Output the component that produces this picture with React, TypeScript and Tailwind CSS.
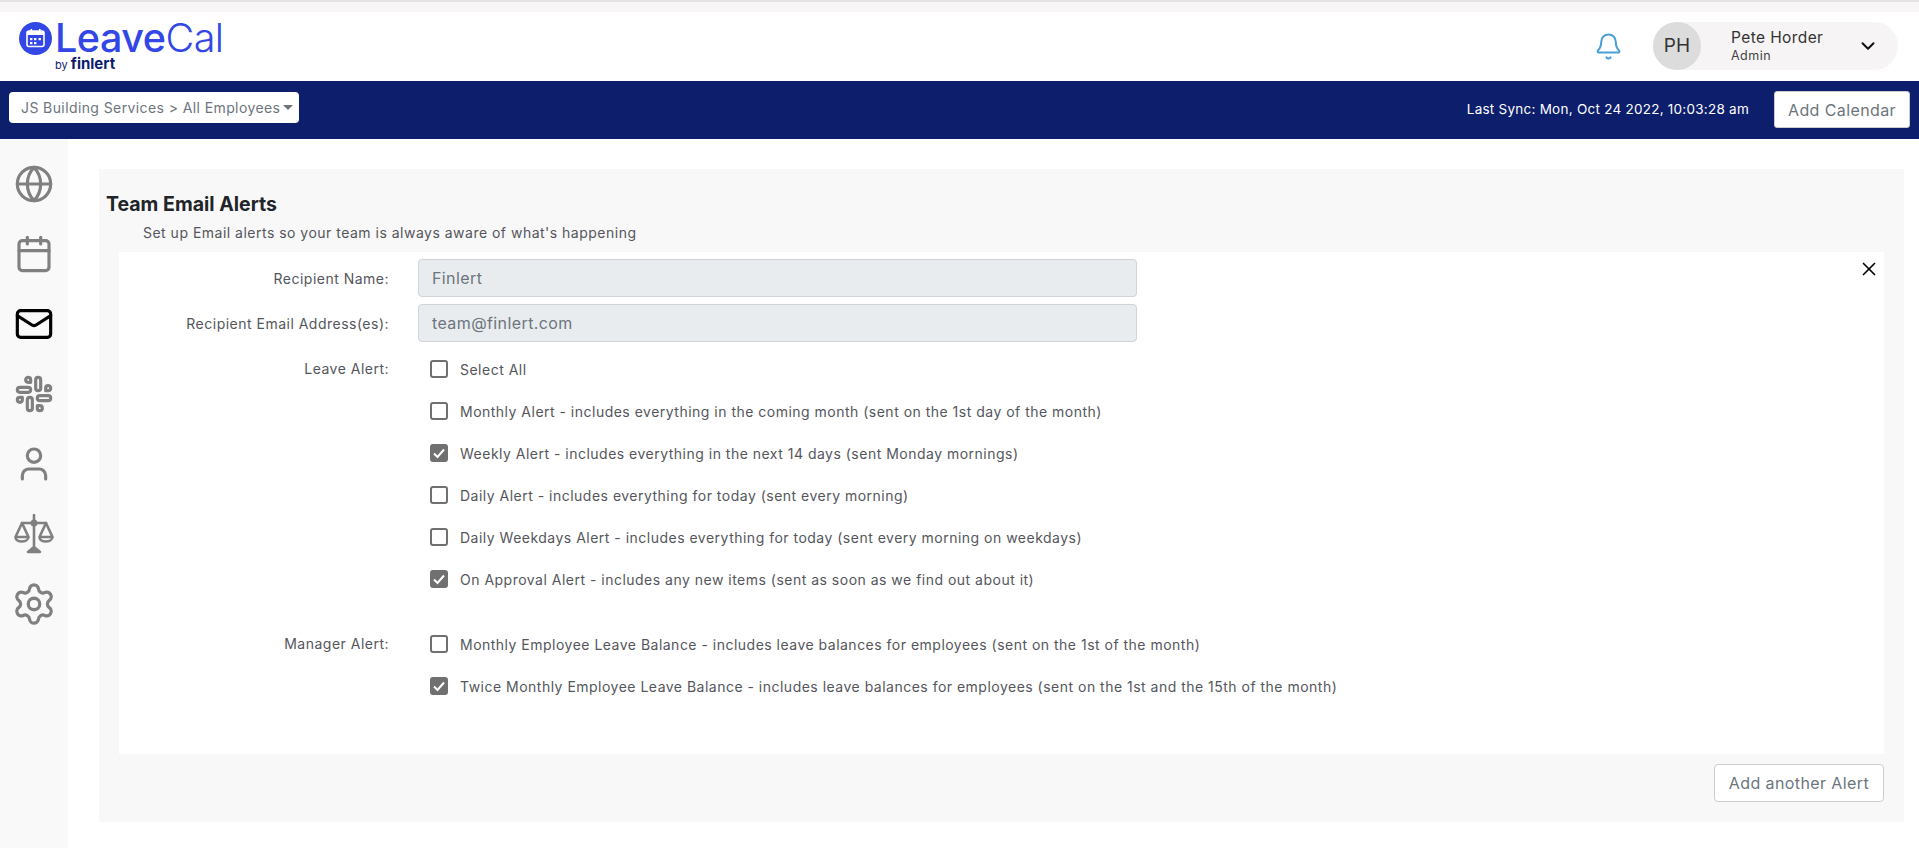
import { Bell, Calendar, ChevronDown, Globe, Mail, Settings, Slack, User, X } from 'lucide-react';

const font = { fontFamily: 'Inter, "Open Sans", sans-serif' };

type AlertOption = {
  label: string;
  checked?: boolean;
};

const leaveAlerts: AlertOption[] = [
  { label: 'Select All' },
  { label: 'Monthly Alert - includes everything in the coming month (sent on the 1st day of the month)' },
  { label: 'Weekly Alert - includes everything in the next 14 days (sent Monday mornings)', checked: true },
  { label: 'Daily Alert - includes everything for today (sent every morning)' },
  { label: 'Daily Weekdays Alert - includes everything for today (sent every morning on weekdays)' },
  { label: 'On Approval Alert - includes any new items (sent as soon as we find out about it)', checked: true },
];

const managerAlerts: AlertOption[] = [
  { label: 'Monthly Employee Leave Balance - includes leave balances for employees (sent on the 1st of the month)' },
  {
    label:
      'Twice Monthly Employee Leave Balance - includes leave balances for employees (sent on the 1st and the 15th of the month)',
    checked: true,
  },
];

const LogoIcon = () => (
  <svg width="33" height="33" viewBox="0 0 33 33">
    <circle cx="16.5" cy="16.5" r="16.5" fill="#3247e6" />
    <rect x="8" y="9" width="17" height="15.5" rx="2" fill="none" stroke="#fff" strokeWidth="1.6" />
    <rect x="8" y="9" width="17" height="4" fill="#fff" />
    <rect x="11.5" y="7" width="1.6" height="4" fill="#fff" />
    <rect x="20" y="7" width="1.6" height="4" fill="#fff" />
    <rect x="11" y="16" width="2.4" height="2.2" fill="#fff" />
    <rect x="15" y="16" width="2.4" height="2.2" fill="#fff" />
    <rect x="19.5" y="16" width="2.4" height="2.2" fill="#fff" />
    <rect x="11" y="20" width="2.4" height="2.2" fill="#fff" />
    <rect x="15" y="20" width="2.4" height="2.2" fill="#fff" />
  </svg>
);

const ScaleIcon = () => (
  <svg width="40" height="40" viewBox="0 0 40 40" fill="none" stroke="#808080" strokeWidth="2.6" strokeLinejoin="round" strokeLinecap="round">
    <path d="M20 1v31" />
    <circle cx="20" cy="9" r="2.2" />
    <path d="M8 9h24" />
    <path d="M8 9 1.5 23c0 6 12.5 6 13 0L8 9Z" />
    <path d="M32 9l-6.5 14c0 6 12.5 6 13 0L32 9Z" />
    <path d="M2 23h12M26 23h12" />
    <path d="M14 38l6-5 6 5H14Z" fill="#808080" />
  </svg>
);

const Checkbox = ({ checked }: { checked?: boolean }) => (
  <span
    className={`flex h-[18px] w-[18px] shrink-0 items-center justify-center rounded-[3px] border-2 border-[#707070] ${
      checked ? 'bg-[#707070]' : 'bg-white'
    }`}
  >
    {checked && (
      <svg width="14" height="14" viewBox="0 0 14 14" fill="none" stroke="#fff" strokeWidth="2">
        <path d="M2 7.5 5.5 11 12 3.5" />
      </svg>
    )}
  </span>
);

const AlertRow = ({ label, checked }: AlertOption) => (
  <div className="flex h-[42px] items-center gap-[12px] pl-[12px]">
    <Checkbox checked={checked} />
    <span className="text-[14px] tracking-[0.49px] text-[#55565c] whitespace-nowrap">{label}</span>
  </div>
);

const FieldLabel = ({ children }: { children: string }) => (
  <div className="w-[270px] shrink-0 text-right text-[14px] tracking-[0.49px] text-[#55565c]">{children}</div>
);

const App = () => {
  return (
    <div className="h-[848px] w-full overflow-hidden bg-white" style={font}>
      <div className="h-[12px] border-t-2 border-[#e4e4e4] bg-[#f7f5f5]" />

      <header className="flex h-[69px] items-center justify-between bg-white pb-[1px] pl-[19px] pr-[21px]">
        <div className="flex items-start gap-[3px] self-start pt-[7px]">
          <div className="mt-[3px]">
            <LogoIcon />
          </div>
          <div className="flex flex-col">
            <div className="text-[39.5px] leading-[38px] tracking-[-0.5px] text-[#3247e6]">
              <span className="font-medium">Leave</span>
              <span className="font-light">Cal</span>
            </div>
            <div className="text-[15px] leading-[13px] text-[#0d1d6b]">
              <span className="text-[11px]">by </span>
              <span className="font-bold">finlert</span>
            </div>
          </div>
        </div>

        <div className="flex items-center gap-[30px]">
          <Bell size={29} strokeWidth={1.7} className="text-[#4a9fd8]" />
          <div className="flex h-[48px] w-[245px] items-center rounded-full bg-[#f6f4f4]">
            <div className="flex h-[48px] w-[48px] items-center justify-center rounded-full bg-[#dcdcdc] text-[19px] text-[#333]">
              PH
            </div>
            <div className="ml-[30px] flex-1">
              <div className="text-[15.5px] leading-[20px] tracking-[0.4px] text-[#333]">Pete Horder</div>
              <div className="text-[12.5px] leading-[16px] tracking-[0.5px] text-[#444]">Admin</div>
            </div>
            <ChevronDown size={22} strokeWidth={2.2} className="mr-[19px] text-[#111]" />
          </div>
        </div>
      </header>

      <nav className="flex h-[58px] items-start justify-between bg-[#0c1e6c] pl-[9px] pr-[9px] pt-[10px]">
        <button className="mt-[1px] flex h-[31px] w-[290px] items-center rounded-[4px] bg-white pl-[12px] text-[14px] tracking-[0.4px] text-[#6c757d]">
          JS Building Services &gt; All Employees
          <span className="ml-[3px] h-0 w-0 border-x-[5px] border-t-[5px] border-x-transparent border-t-[#6c757d]" />
        </button>
        <div className="flex items-center gap-[25px]">
          <span className="text-[13.5px] tracking-[0.25px] text-white">Last Sync: Mon, Oct 24 2022, 10:03:28 am</span>
          <button className="h-[37px] w-[136px] rounded-[3px] border border-[#ccc] bg-white text-[16px] tracking-[0.4px] text-[#6c757d]">
            Add Calendar
          </button>
        </div>
      </nav>

      <div className="flex h-[709px]">
        <aside className="flex w-[68px] shrink-0 flex-col items-center gap-[30px] bg-[#f9f9f9] pt-[25px]">
          <Globe size={40} strokeWidth={1.9} className="text-[#808080]" />
          <Calendar size={40} strokeWidth={1.9} className="text-[#808080]" />
          <Mail size={40} strokeWidth={1.9} className="text-black" />
          <Slack size={40} strokeWidth={1.9} className="text-[#808080]" />
          <User size={40} strokeWidth={1.9} className="text-[#808080]" />
          <ScaleIcon />
          <Settings size={46} strokeWidth={1.7} className="-my-[3px] text-[#808080]" />
        </aside>

        <main className="flex-1 pl-[31px] pr-[15px] pt-[30px]">
          <section className="h-[653px] bg-[#f8f8f8] px-[20px] pt-[22px]">
            <h1 className="-ml-[13px] text-[19.5px] font-bold leading-[26px] text-[#212529]">Team Email Alerts</h1>
            <p className="ml-[24px] mt-[6px] text-[14px] leading-[20px] tracking-[0.49px] text-[#55565c]">
              Set up Email alerts so your team is always aware of what's happening
            </p>

            <div className="relative mt-[9px] h-[502px] bg-white pt-[7px]">
              <X size={22} strokeWidth={1.8} className="absolute right-[4px] top-[6px] text-black" />

              <div className="flex items-center gap-[29px]">
                <FieldLabel>Recipient Name:</FieldLabel>
                <div className="flex h-[38px] w-[719px] items-center rounded-[4px] border border-[#ced4da] bg-[#e9ecef] pl-[13px] text-[16px] tracking-[0.4px] text-[#6c757d]">
                  Finlert
                </div>
              </div>
              <div className="mt-[7px] flex items-center gap-[29px]">
                <FieldLabel>Recipient Email Address(es):</FieldLabel>
                <div className="flex h-[38px] w-[719px] items-center rounded-[4px] border border-[#ced4da] bg-[#e9ecef] pl-[13px] text-[16px] tracking-[0.4px] text-[#6c757d]">
                  team@finlert.com
                </div>
              </div>

              <div className="mt-[6px] flex gap-[29px]">
                <div className="pt-[10px]">
                  <FieldLabel>Leave Alert:</FieldLabel>
                </div>
                <div>
                  {leaveAlerts.map((option) => (
                    <AlertRow key={option.label} {...option} />
                  ))}
                </div>
              </div>

              <div className="mt-[23px] flex gap-[29px]">
                <div className="pt-[10px]">
                  <FieldLabel>Manager Alert:</FieldLabel>
                </div>
                <div>
                  {managerAlerts.map((option) => (
                    <AlertRow key={option.label} {...option} />
                  ))}
                </div>
              </div>
            </div>

            <div className="mt-[10px] flex justify-end">
              <button className="h-[38px] w-[170px] rounded-[4px] border border-[#ccc] bg-white text-[16px] tracking-[0.4px] text-[#6c757d]">
                Add another Alert
              </button>
            </div>
          </section>
        </main>
      </div>
    </div>
  );
};

export default App;
